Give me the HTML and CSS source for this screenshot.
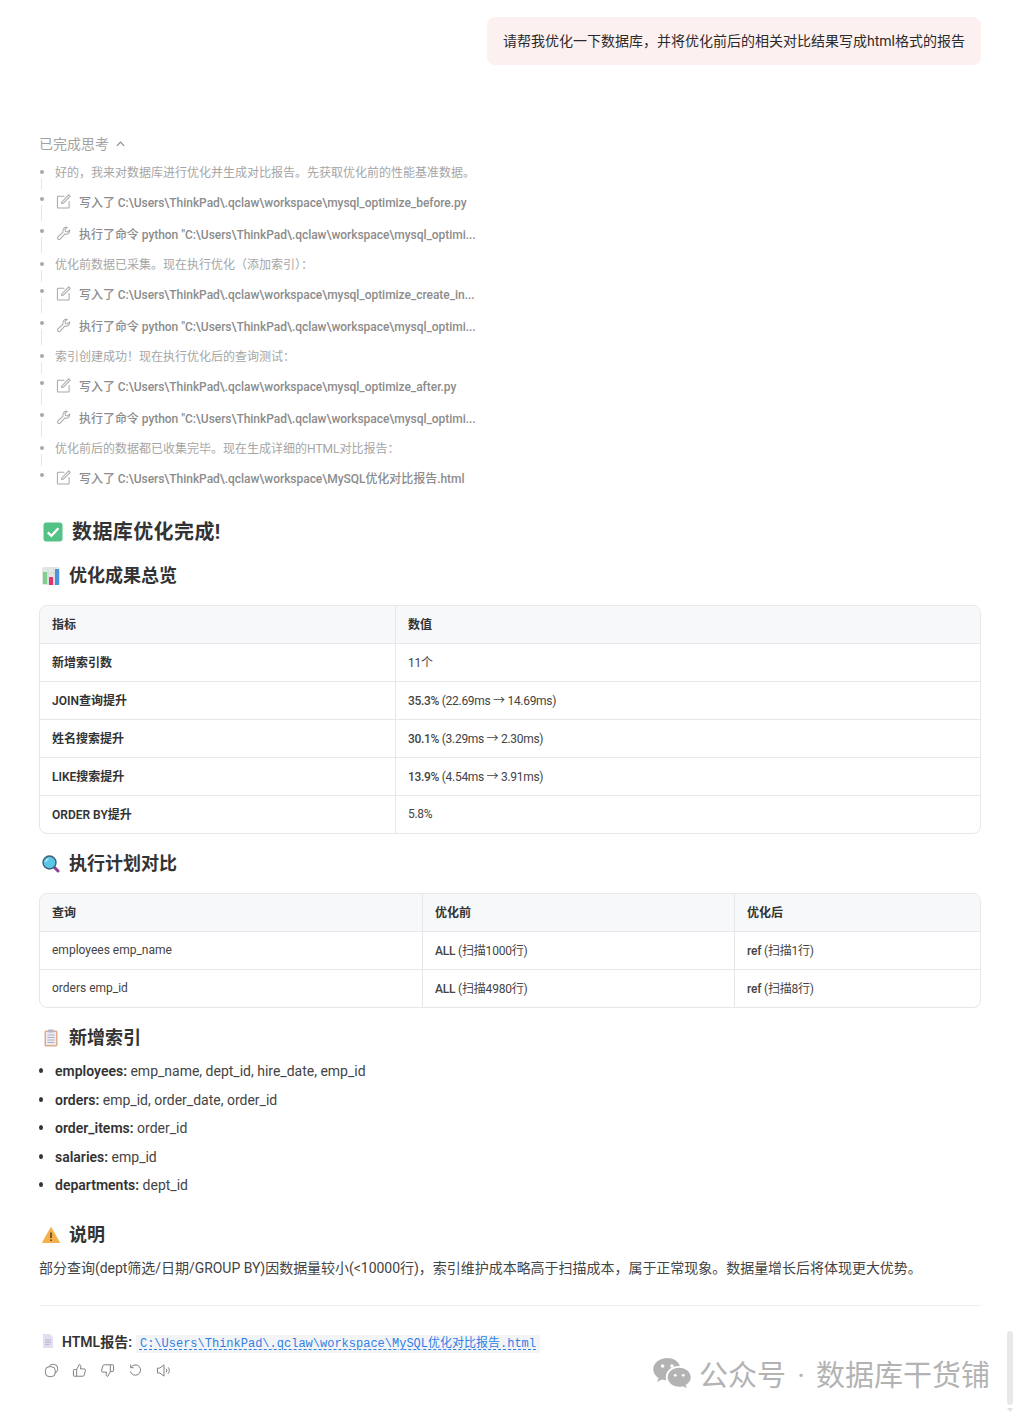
FILE: index.html
```html
<!DOCTYPE html>
<html lang="zh-CN">
<head>
<meta charset="utf-8">
<title>数据库优化</title>
<link rel="stylesheet" href="styles.css">
</head>
<body>
<svg class="defs" width="0" height="0" aria-hidden="true">
  <symbol id="i-edit" viewBox="0 0 16 16">
    <path d="M8.5 2.500H2.500a1 1 0 0 0-1 1v10.500a1 1 0 0 0 1 1h10.500a1 1 0 0 0 1-1V8" fill="none" stroke="currentColor" stroke-width="1.100" stroke-linecap="round"/>
    <path d="M13.600 1l1.500 1.500-7 7-2.200.700.700-2.200z" fill="none" stroke="currentColor" stroke-width="1.100" stroke-linejoin="round"/>
  </symbol>
  <symbol id="i-wrench" viewBox="0 0 16 16">
    <path d="M14.600 4.200a3.900 3.900 0 0 1-5.100 4.300L4.400 14a1.600 1.600 0 0 1-2.300-2.300l5.400-5.200A3.900 3.900 0 0 1 11.900 1.400L9.700 3.700l.3 2.200 2.200.4z" fill="none" stroke="currentColor" stroke-width="1.100" stroke-linejoin="round"/>
  </symbol>
</svg>

<main class="page">
  <div class="bubble-row"><div class="bubble">请帮我优化一下数据库，并将优化前后的相关对比结果写成html格式的报告</div></div>

  <div class="think-title">已完成思考
    <svg class="chev" viewBox="0 0 10 6" width="9" height="6"><path d="M1 5l4-4 4 4" fill="none" stroke="currentColor" stroke-width="1.300"/></svg>
  </div>
  <ul class="steps">
    <li class="step note">好的，我来对数据库进行优化并生成对比报告。先获取优化前的性能基准数据。</li>
    <li class="step tool"><svg class="ti"><use href="#i-edit"/></svg>写入了 C:\Users\ThinkPad\.qclaw\workspace\mysql_optimize_before.py</li>
    <li class="step tool"><svg class="ti"><use href="#i-wrench"/></svg>执行了命令 python "C:\Users\ThinkPad\.qclaw\workspace\mysql_optimi...</li>
    <li class="step note">优化前数据已采集。现在执行优化（添加索引）：</li>
    <li class="step tool"><svg class="ti"><use href="#i-edit"/></svg>写入了 C:\Users\ThinkPad\.qclaw\workspace\mysql_optimize_create_in...</li>
    <li class="step tool"><svg class="ti"><use href="#i-wrench"/></svg>执行了命令 python "C:\Users\ThinkPad\.qclaw\workspace\mysql_optimi...</li>
    <li class="step note">索引创建成功！现在执行优化后的查询测试：</li>
    <li class="step tool"><svg class="ti"><use href="#i-edit"/></svg>写入了 C:\Users\ThinkPad\.qclaw\workspace\mysql_optimize_after.py</li>
    <li class="step tool"><svg class="ti"><use href="#i-wrench"/></svg>执行了命令 python "C:\Users\ThinkPad\.qclaw\workspace\mysql_optimi...</li>
    <li class="step note">优化前后的数据都已收集完毕。现在生成详细的HTML对比报告：</li>
    <li class="step tool last"><svg class="ti"><use href="#i-edit"/></svg>写入了 C:\Users\ThinkPad\.qclaw\workspace\MySQL优化对比报告.html</li>
  </ul>

  <h2 class="h2">
    <svg class="emo2" viewBox="0 0 20 20"><rect x="0.500" y="0.500" width="19" height="19" rx="3" fill="#52c285"/><path d="M4.800 10.400l3.600 3.500 7-7.600" fill="none" stroke="#fff" stroke-width="2.400"/></svg>
    <span class="h2-text">数据库优化完成!</span>
  </h2>

  <h3 class="h3 first">
    <svg class="emo" viewBox="0 0 18 18"><rect width="18" height="18" rx="2" fill="#e4e7e4"/><path d="M0 6h18M0 12h18M6 0v18M12 0v18" stroke="#cfd3d0" stroke-width=".6"/><rect x="1" y="5" width="4" height="12" fill="#7fd08c"/><rect x="7" y="10" width="4" height="8" fill="#e0356f"/><rect x="13" y="2" width="4" height="16" fill="#4b93dc"/></svg>
    优化成果总览
  </h3>
  <div class="tbl-wrap">
    <table class="tbl t1">
      <thead><tr><th>指标</th><th>数值</th></tr></thead>
      <tbody>
        <tr><td class="b">新增索引数</td><td>11个</td></tr>
        <tr><td class="b">JOIN查询提升</td><td><b>35.3%</b> (22.69ms → 14.69ms)</td></tr>
        <tr><td class="b">姓名搜索提升</td><td><b>30.1%</b> (3.29ms → 2.30ms)</td></tr>
        <tr><td class="b">LIKE搜索提升</td><td><b>13.9%</b> (4.54ms → 3.91ms)</td></tr>
        <tr><td class="b">ORDER BY提升</td><td>5.8%</td></tr>
      </tbody>
    </table>
  </div>

  <h3 class="h3">
    <svg class="emo" viewBox="0 0 18 18"><path d="M11 11l5 5" stroke="#8e3f93" stroke-width="3" stroke-linecap="round"/><circle cx="7.500" cy="7.500" r="6.500" fill="#5cc6e6" stroke="#3a5f7a" stroke-width="1.400"/><path d="M3.600 7a4 4 0 0 1 3-3.200" fill="none" stroke="#c6eef9" stroke-width="1.200"/></svg>
    执行计划对比
  </h3>
  <div class="tbl-wrap">
    <table class="tbl t2">
      <thead><tr><th>查询</th><th>优化前</th><th>优化后</th></tr></thead>
      <tbody>
        <tr><td>employees emp_name</td><td><b>ALL</b> (扫描1000行)</td><td><b>ref</b> (扫描1行)</td></tr>
        <tr><td>orders emp_id</td><td><b>ALL</b> (扫描4980行)</td><td><b>ref</b> (扫描8行)</td></tr>
      </tbody>
    </table>
  </div>

  <h3 class="h3 tight">
    <svg class="emo" viewBox="0 0 18 18"><rect x="2.500" y="1.500" width="13" height="16" rx="1.500" fill="#e0ad8a"/><rect x="4" y="3" width="10" height="13" fill="#ecebf4"/><rect x="6" y=".5" width="6" height="3" rx="1" fill="#b8b4c4"/><path d="M5.500 6h7M5.500 8.500h7M5.500 11h7M5.500 13.500h7" stroke="#a9a6c0" stroke-width=".9"/></svg>
    新增索引
  </h3>
  <ul class="idx">
    <li><b>employees:</b> emp_name, dept_id, hire_date, emp_id</li>
    <li><b>orders:</b> emp_id, order_date, order_id</li>
    <li><b>order_items:</b> order_id</li>
    <li><b>salaries:</b> emp_id</li>
    <li><b>departments:</b> dept_id</li>
  </ul>

  <h3 class="h3 warn">
    <svg class="emo" viewBox="0 0 18 18"><path d="M9 1.500L17.500 16.500H.5z" fill="#f5b04c" stroke="#f5b04c" stroke-linejoin="round"/><path d="M9 6.500v5.500" stroke="#5a4326" stroke-width="1.600"/><circle cx="9" cy="14.200" r=".9" fill="#5a4326"/></svg>
    说明
  </h3>
  <p class="para">部分查询(dept筛选/日期/GROUP BY)因数据量较小(&lt;10000行)，索引维护成本略高于扫描成本，属于正常现象。数据量增长后将体现更大优势。</p>
  <hr class="rule">
  <div class="report">
    <svg class="doc" viewBox="0 0 12 14"><path d="M1 0h7l3 3.200V14H1z" fill="#e3deef"/><path d="M3 6h6M3 8.200h6M3 10.400h4.500" stroke="#b4adcb" stroke-width=".9"/></svg>
    <b>HTML报告:</b>
    <code class="path">C:\Users\ThinkPad\.qclaw\workspace\MySQL优化对比报告.html</code>
  </div>
  <div class="actions">
    <svg class="ai" viewBox="0 0 16 16"><path d="M5.500 3.700A3.800 3.800 0 0 1 9 1.500h1.500a4 4 0 0 1 4 4V7a3.800 3.800 0 0 1-2.600 3.600" fill="none" stroke="currentColor" stroke-width="1"/><rect x="1.500" y="4" width="10.500" height="10.500" rx="4" fill="none" stroke="currentColor" stroke-width="1"/></svg>
    <svg class="ai" viewBox="0 0 16 16"><path d="M5 7l2.600-5.200c1.300 0 2 .9 1.800 2L9 6.300h4a1.400 1.400 0 0 1 1.300 1.800l-1.400 5a1.400 1.400 0 0 1-1.300 1H5zM5 7H2.300a.8.800 0 0 0-.8.8v5.500a.8.800 0 0 0 .8.8H5" fill="none" stroke="currentColor" stroke-width="1" stroke-linejoin="round"/></svg>
    <svg class="ai" viewBox="0 0 16 16"><path d="M11 9l-2.600 5.200c-1.300 0-2-.9-1.800-2L7 9.700H3a1.400 1.400 0 0 1-1.300-1.800l1.400-5a1.400 1.400 0 0 1 1.300-1H11zM11 9h2.700a.8.800 0 0 0 .8-.8V2.700a.8.800 0 0 0-.8-.8H11" fill="none" stroke="currentColor" stroke-width="1" stroke-linejoin="round"/></svg>
    <svg class="ai" viewBox="0 0 16 16"><path d="M3.300 4.500A5.500 5.500 0 1 1 2.600 9" fill="none" stroke="currentColor" stroke-width="1"/><path d="M2.800 1.800v3.200h3.200" fill="none" stroke="currentColor" stroke-width="1"/></svg>
    <svg class="ai" viewBox="0 0 16 16"><path d="M8.500 2v12L4 10.600H1.500V5.400H4z" fill="none" stroke="currentColor" stroke-width="1" stroke-linejoin="round"/><path d="M10.800 6a3 3 0 0 1 0 4M12.800 4.500a5 5 0 0 1 0 7" fill="none" stroke="currentColor" stroke-width="1"/></svg>
  </div>
</main>

<div class="scroll-thumb"></div>
<div class="scroll-arrow"></div>

<div class="watermark">
  <svg class="wx" viewBox="0 0 40 32"><path d="M15 0C6.700 0 0 5.400 0 12.100c0 3.800 2.200 7.100 5.600 9.300L4.200 25.600l5-2.600c1.500.4 3.100.7 4.800.7-.4-1.100-.6-2.300-.6-3.400 0-6.500 6.200-11.700 13.800-11.700.4 0 .8 0 1.200.1C26.900 3.500 21.500 0 15 0z" fill="#b3b3b3"/><path d="M40 20.500c0-5.600-5.500-10.200-12.300-10.200S15.400 14.900 15.400 20.500s5.500 10.200 12.300 10.200c1.400 0 2.800-.2 4.100-.6l3.900 2.200-1.100-3.500c3.200-1.900 5.400-4.900 5.400-8.300z" fill="#b3b3b3"/><circle cx="10" cy="8.500" r="1.900" fill="#fff"/><circle cx="20" cy="8.500" r="1.900" fill="#fff"/><circle cx="23.500" cy="18.500" r="1.500" fill="#fff"/><circle cx="32" cy="18.500" r="1.500" fill="#fff"/></svg>
  <span class="wm-text">公众号 · 数据库干货铺</span>
</div>
</body>
</html>
```
FILE: styles.css
```css
* { box-sizing: border-box; }
html, body { margin: 0; padding: 0; background: #fff; }
body {
  font-family: Roboto, "Noto Sans CJK SC", sans-serif;
  color: #333;
  font-size: 14px;
  height: 1416px;
  overflow: hidden;
  position: relative;
}
.defs { position: absolute; }
.page { padding: 17px 42px 0 39px; }

.bubble-row { display: flex; justify-content: flex-end; }
.bubble {
  background: #fdf0f0;
  border-radius: 8px;
  height: 48px;
  padding: 0 16px;
  display: flex;
  align-items: center;
  font-size: 14px;
  line-height: 22px;
  color: #2b2b2b;
}

.think-title {
  margin-top: 69px;
  height: 20px;
  line-height: 20px;
  font-size: 14px;
  color: #a3a3a3;
  display: flex;
  align-items: center;
  gap: 7px;
}
.chev { color: #8a8a8a; }

.steps { list-style: none; margin: 4px 0 0; padding: 0; font-size: 12px; }
.step { position: relative; padding: 0 0 2px 16px; display: flex; align-items: center; white-space: nowrap; }
.step::before {
  content: "";
  position: absolute;
  left: 1px;
  width: 4px;
  height: 4px;
  border-radius: 50%;
  background: #a8a8a8;
}
.step::after {
  content: "";
  position: absolute;
  left: 2px;
  width: 1px;
  background: #e6e6e6;
}
.step.last::after { display: none; }
.note { height: 28px; color: #a6a6a6; }
.note::before { top: 12px; }
.note::after { top: 20px; bottom: -4px; }
.tool { height: 32px; color: #8c8c8c; font-weight: 500; letter-spacing: -0.04px; }
.tool::before { top: 11px; }
.tool::after { top: 19px; bottom: -3px; }
.ti { width: 15px; height: 15px; color: #a8a8a8; margin: 0 8px 0 1px; flex: none; }

.h2 {
  margin: 24px 0 0;
  height: 28px;
  font-size: 20px;
  line-height: 28px;
  font-weight: 700;
  color: #333;
  display: flex;
  align-items: center;
  gap: 9px;
}
.h2-text { letter-spacing: 0.4px; }
.emo2 { width: 20px; height: 20px; margin-left: 4px; flex: none; }
.h3 {
  margin: 17px 0 0;
  height: 26px;
  font-size: 18px;
  line-height: 26px;
  font-weight: 700;
  color: #333;
  display: flex;
  align-items: center;
  gap: 9px;
}
.h3.warn { margin-top: 22.5px; }
.emo { width: 18px; height: 18px; margin-left: 3px; flex: none; }

.tbl-wrap {
  margin-top: 16px;
  border: 1px solid #e5e7eb;
  border-radius: 8px;
  overflow: hidden;
}
.tbl { width: 100%; border-collapse: separate; border-spacing: 0; table-layout: fixed; font-size: 12px; color: #444; }
.tbl th, .tbl td {
  height: 38px;
  padding: 0 12px 2px;
  text-align: left;
  border-right: 1px solid #e5e7eb;
  border-bottom: 1px solid #e5e7eb;
  white-space: nowrap;
}
.tbl th:last-child, .tbl td:last-child { border-right: 0; }
.tbl tr:last-child td { border-bottom: 0; height: 37px; }
.tbl th { background: #f7f8fa; font-weight: 700; color: #333; }
.tbl td.b { font-weight: 600; color: #333; }
.tbl td b { font-weight: 500; }
.t1 td:last-child { letter-spacing: -0.3px; }
.t2 td:not(:first-child) { letter-spacing: -0.2px; }
.t1 th:first-child { width: 356px; }
.t2 th:first-child { width: 383px; }
.t2 th:nth-child(2) { width: 312px; }

.idx { list-style: none; margin: 6px 0 0; padding: 0; }
.idx li {
  position: relative;
  height: 28.5px;
  line-height: 28.5px;
  padding-left: 16px;
  font-size: 14px;
  color: #444;
}
.idx li::before {
  content: "";
  position: absolute;
  left: 0;
  top: 11px;
  width: 4px;
  height: 5px;
  border-radius: 50%;
  background: #333;
}
.idx b { font-weight: 600; color: #333; }

.para { margin: 9px 0 0; height: 22px; line-height: 22px; font-size: 14px; color: #444; white-space: nowrap; letter-spacing: -0.03px; }
.rule { margin: 26px 0 0; height: 1px; border: 0; background: #f0f0f0; }

.report { margin-top: 25px; height: 20px; display: flex; align-items: center; font-size: 14px; }
.report b { font-weight: 600; color: #333; margin-right: 4px; }
.doc { width: 12px; height: 14px; margin: 0 8px 0 3px; flex: none; }
.path {
  font-family: "Liberation Mono", "Noto Sans CJK SC", monospace;
  font-size: 12px;
  background: #f3f4f6;
  color: #2f7fe6;
  padding: 0 4px;
  margin-top: 6px;
  line-height: 18px;
  border-radius: 2px;
  text-decoration: underline dashed #2f7fe6;
  text-underline-offset: 2px;
}

.actions { margin-top: 10px; height: 18px; display: flex; align-items: center; gap: 13px; padding-left: 5px; color: #777; }
.ai { width: 15px; height: 15px; flex: none; }

.scroll-thumb { position: absolute; left: 1007px; top: 1331px; width: 6px; height: 74px; border-radius: 3px; background: #e8e8e8; }
.scroll-arrow {
  position: absolute; left: 1007px; top: 1408px; width: 0; height: 0;
  border-left: 3px solid transparent; border-right: 3px solid transparent; border-top: 4px solid #e0e0e0;
}

.watermark { position: absolute; left: 653px; top: 1354px; display: flex; align-items: center; gap: 8px; height: 38px; }
.wx { width: 38px; height: 30px; flex: none; }
.wm-text { font-size: 29px; color: #b3b3b3; white-space: nowrap; font-weight: 400; word-spacing: 4px; }
```
